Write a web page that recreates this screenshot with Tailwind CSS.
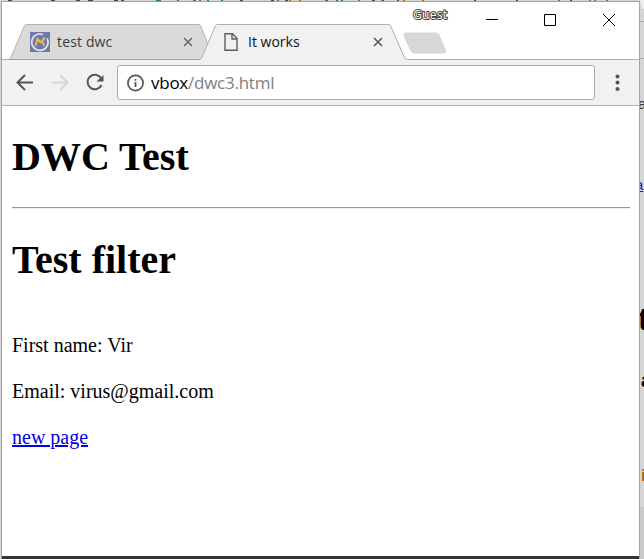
<!DOCTYPE html>
<html lang="en">
<head>
<meta charset="utf-8">
<title>It works</title>
<script src="https://cdn.jsdelivr.net/npm/@tailwindcss/browser@4"></script>
</head>
<body class="relative h-[559px] w-[644px] overflow-hidden bg-[#d5d5d5]">
<!-- page behind the window -->
<svg class="absolute inset-0" width="644" height="559" viewBox="0 0 644 559" aria-hidden="true">
  <path d="M8 .5H12M51 .5H55M76 .5H80M88 .5H93M114 .5H118M121 .5H124M240 .5H243M271 .5H274M285 .5H288M372 .5H375M397 .5H399M474 .5H476M516 .5H518M570 .5H572M382 .5H384" stroke="#4a4444"/>
  <path d="M156 .5H161M177 .5H179M193 .5H196M207 .5H209M221 .5H223M325 .5H328M336 .5H338M341 .5H343" stroke="#25777b"/>
  <path d="M199 .5H201M277 .5H279M289 .5H291M299 .5H301M403 .5H405M422 .5H424" stroke="#b06a20"/>
  <path d="M358 .5H360M558 .5H560M381 .5H383M589 .5H591M594 .5H596M606 .5H608" stroke="#6b7492"/>
  <path d="M0 58.500H2M640 21.500H644M640 58.500H644" stroke="#aaa"/>
  <path d="M640 0H644V9H642Z" fill="#eee"/>
  <path d="M640 507H644V559H640Z" fill="#cacaca"/>
</svg>
<div class="absolute left-[640px] top-0 h-[559px] w-1 overflow-hidden font-['Liberation_Sans',sans-serif] leading-none">
  <span class="absolute -left-[2px] top-[96px] text-[15px] text-[#333]">a</span>
  <span class="absolute -left-[5px] top-[177px] text-[15px] text-[#2414c8] underline">a</span>
  <span class="absolute -left-[2px] top-[303px] text-[32px] font-bold text-black">t</span>
  <span class="absolute left-[1px] top-[370px] text-[20px] font-bold text-black">a</span>
  <span class="absolute left-[1px] top-[467px] text-[17px] font-bold text-[#ac6812]">i</span>
</div>

<div class="relative ml-px mt-px flex h-[558px] w-[639px] flex-col border border-b-0 border-[#92bb5c] bg-white">
  <!-- title bar and tabs -->
  <header class="relative h-[58px] shrink-0 font-['Open_Sans','Noto_Sans',sans-serif]">
    <svg class="absolute inset-0" width="637" height="58" viewBox="2 2 637 58" aria-hidden="true">
      <path d="M2 59.5H639" stroke="#b0b0b0"/>
      <path d="M8.500 59.500Q10.500 59 11.500 56L24.500 25.500Q25 24.500 26.500 24.500H198Q200 24.500 200.500 25.500L214 59.500Z" fill="#dadada" stroke="#b4b4b4"/>
      <path d="M9 59.500H200" stroke="#a0a0a0"/>
      <path d="M200 60Q201.500 59 202.500 56L215.500 25.500Q216 24.500 217.500 24.500H388Q390 24.500 390.500 25.500L404 56.500Q405 59.500 407.500 59.500V60Z" fill="#f1f1f1"/>
      <path d="M200 59.500Q201.500 58.500 202.500 56L215.500 25.500Q216 24.500 217.500 24.500H388Q390 24.500 390.500 25.500L404 56.500Q405 59.500 407.500 59.500" fill="none" stroke="#adadad"/>
      <path d="M405.500 33H435Q438 33 439 35L445.500 50.500Q446.500 53 443.500 53H414.500Q412 53 411 51L404 35.500Q403 33 405.500 33Z" fill="#d8d8d8" stroke="#d0d0d0" stroke-width=".8"/>
    </svg>
    <div class="relative flex pt-[23px]">
      <div class="flex h-[34px] w-[194px] items-center pl-[28px]">
        <svg width="20" height="20" viewBox="0 0 20 20" aria-hidden="true"><path d="M0 0H20V20H0Z" fill="#6f78ab"/><path d="M13 2.600A8.200 8.200 0 1 0 17.200 6.500" fill="none" stroke="#e6e8f1" stroke-width="1.600"/><path d="M5.500 14L7.500 7L10.500 10.500L15 5.500M12.500 9L14 14" fill="none" stroke="#f0b64f" stroke-width="2"/></svg>
        <span class="ml-[7px] w-[125px] whitespace-nowrap text-[14px] leading-5 tracking-[0.15px] text-[#3b3b3b]">test dwc</span>
        <svg class="shrink-0" width="12" height="12" viewBox="0 0 12 12" aria-hidden="true"><path d="M2 2L10 10M10 2L2 10" stroke="#666" stroke-width="1.500"/></svg>
      </div>
      <div class="flex h-[34px] items-center pl-[27px]">
        <svg width="16" height="20" viewBox="0 0 16 20" aria-hidden="true"><path d="M2 1.700H9.500L14 6.200V18.300H2ZM9 2V7H14" fill="none" stroke="#5e5e5e" stroke-width="1.400"/></svg>
        <span class="ml-[9px] w-[124px] whitespace-nowrap text-[14px] leading-5 text-[#111]">It works</span>
        <svg class="shrink-0" width="12" height="12" viewBox="0 0 12 12" aria-hidden="true"><path d="M2 2L10 10M10 2L2 10" stroke="#555" stroke-width="1.500"/></svg>
      </div>
    </div>
    <span class="absolute left-[411px] top-[5px] text-[12px] leading-4 tracking-[0.3px] text-white [paint-order:stroke_fill] [-webkit-text-stroke:2px_#444]">Guest</span>
    <svg class="absolute left-[480px] top-[8px]" width="140" height="20" viewBox="482 10 140 20" fill="none" stroke="#000" aria-hidden="true"><path d="M486 19.500H498M544.500 14.500H555.500V25.500H544.500ZM603 14L615 26M615 14L603 26"/></svg>
  </header>

  <!-- toolbar -->
  <nav class="flex h-[46px] shrink-0 items-center border-b border-[#b2b2b2] bg-[#f1f1f1]">
    <svg class="shrink-0" width="115" height="44" viewBox="2 60 115 44" fill="none" stroke-width="2" aria-hidden="true"><path d="M33 81.500H18M25 74L17.500 81.500L25 89" stroke="#555"/><path d="M52 81.500H67M60 74L67.500 81.500L60 89" stroke="#d6d6d6"/><path d="M101 77A7.300 7.300 0 1 0 101.500 84" stroke="#555"/><path d="M103.500 74V80.500H96.500Z" fill="#555"/></svg>
    <div class="flex h-[35px] w-[478px] items-center rounded-[3px] border border-[#ababab] bg-white pl-[8px]">
      <svg width="20" height="20" viewBox="0 0 20 20" aria-hidden="true"><circle cx="9.500" cy="10" r="7.600" fill="none" stroke="#555" stroke-width="1.700"/><path d="M8.600 9H10.400V14H8.600ZM8.600 6H10.400V7.700H8.600Z" fill="#555"/></svg>
      <span class="ml-[5px] whitespace-nowrap font-['Open_Sans','Noto_Sans',sans-serif] text-[17px] leading-6 tracking-[-0.25px] text-black">vbox<span class="text-[#808080]">/dwc3.html</span></span>
    </div>
    <svg class="ml-[18.5px]" width="8" height="20" viewBox="0 0 8 20" fill="#555" aria-hidden="true"><circle cx="3.500" cy="3.500" r="2"/><circle cx="3.500" cy="9.500" r="2"/><circle cx="3.500" cy="16" r="2"/></svg>
  </nav>

  <!-- document -->
  <main class="flex grow flex-col border-b-[3px] border-[#333] pl-[10px] pr-[9px] font-['Liberation_Serif',serif] text-[20px] leading-[23px] text-black">
    <h1 class="mt-[28px] text-[40px] font-bold leading-[46px]">DWC Test</h1>
    <hr class="mt-[27px] h-[2px] border-0 border-t border-[#999] bg-[#eee]">
    <h1 class="mt-[28px] text-[40px] font-bold leading-[46px]">Test filter</h1>
    <p class="mt-[51px]">First name: Vir</p>
    <p class="mt-[23px]">Email: virus@gmail.com</p>
    <p class="mt-[23px]"><a class="text-[#0000ee] underline decoration-2 underline-offset-1" href="#">new page</a></p>
  </main>
</div>
</body>
</html>
